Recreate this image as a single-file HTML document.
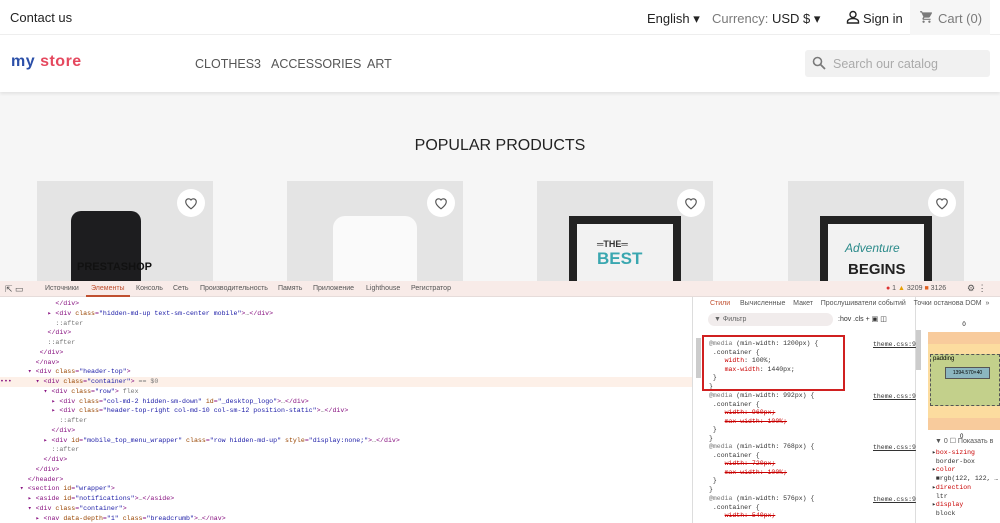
<!DOCTYPE html>
<html><head><meta charset="utf-8"><style>
*{margin:0;padding:0;box-sizing:border-box}
body{width:1000px;height:523px;overflow:hidden;background:#f6f6f6;font-family:"Liberation Sans",sans-serif;position:relative}
.abs{position:absolute}
.top{left:0;top:0;width:1000px;height:35px;background:#fff;border-bottom:1px solid #eee}
.hdr{left:0;top:35px;width:1000px;height:57px;background:#fff;box-shadow:0 2px 3px rgba(0,0,0,.08)}
.t{white-space:nowrap}
.card{top:181px;width:176px;height:100px;background:#e4e4e4;overflow:hidden}
.heart{width:28px;height:28px;border-radius:50%;background:#fff;top:8px;right:8px;display:flex;align-items:center;justify-content:center}
.dt{left:0;top:281px;width:1000px;height:242px;background:#fff}
.tabs{left:0;top:281px;width:1000px;height:16px;background:#f8ebe8;border-bottom:1px solid #e6dcda;font-size:7px;color:#555}
.code{font-family:"Liberation Mono",monospace;font-size:6.6px;color:#881280;line-height:9.75px}
.code div{height:9.75px;white-space:pre}
.a{color:#994500}.v{color:#1a1aa6}.g{color:#777}
.css{font-family:"Liberation Mono",monospace;font-size:6.5px;line-height:8.5px;color:#333;white-space:pre}
.r{color:#c80000}.s{text-decoration:line-through;color:#c80000}
</style></head><body>
<div class="abs top"></div>
<div class="abs t" style="left:10px;top:10px;font-size:13px;color:#232323">Contact us</div>
<div class="abs t" style="left:647px;top:11px;font-size:13px;color:#232323">English ▾</div>
<div class="abs t" style="left:712px;top:11px;font-size:13px;color:#7a7a7a">Currency: <span style="color:#232323">USD $ ▾</span></div>
<svg class="abs" style="left:846px;top:10px" width="14" height="14" viewBox="0 0 14 14"><circle cx="7" cy="4.5" r="3" fill="none" stroke="#232323" stroke-width="1.4"/><path d="M1.5 13v-1.5c0-2 3-3 5.5-3s5.5 1 5.5 3V13z" fill="none" stroke="#232323" stroke-width="1.4"/></svg>
<div class="abs t" style="left:863px;top:11px;font-size:13px;color:#232323">Sign in</div>
<div class="abs" style="left:910px;top:0;width:80px;height:35px;background:#f6f6f6"></div>
<svg class="abs" style="left:919px;top:10px" width="15" height="14" viewBox="0 0 24 24"><path fill="#7a7a7a" d="M7 18c-1.1 0-2 .9-2 2s.9 2 2 2 2-.9 2-2-.9-2-2-2zM1 2v2h2l3.6 7.6-1.4 2.4C5.1 14.3 5 14.6 5 15c0 1.1.9 2 2 2h12v-2H7.4l1.1-2h7.5c.8 0 1.4-.4 1.7-1l3.6-6.5c.1-.2.2-.3.2-.5 0-.6-.4-1-1-1H5.2l-.9-2H1zm16 16c-1.1 0-2 .9-2 2s.9 2 2 2 2-.9 2-2-.9-2-2-2z"/></svg>
<div class="abs t" style="left:938px;top:11px;font-size:13px;color:#7a7a7a">Cart (0)</div>
<div class="abs hdr"></div>
<div class="abs t" style="left:11px;top:53px;font-size:16px;font-weight:bold;letter-spacing:0.5px"><span style="color:#2b4fa8">my</span> <span style="color:#e5485e">store</span></div>
<div class="abs t" style="left:195px;top:57px;font-size:12.5px;color:#555">CLOTHES3</div>
<div class="abs t" style="left:271px;top:57px;font-size:12.5px;color:#555">ACCESSORIES</div>
<div class="abs t" style="left:367px;top:57px;font-size:12.5px;color:#555">ART</div>
<div class="abs" style="left:805px;top:50px;width:185px;height:27px;background:#f1f1f1;border-radius:3px"></div>
<svg class="abs" style="left:812px;top:56px" width="14" height="14" viewBox="0 0 14 14"><circle cx="5.5" cy="5.5" r="4" fill="none" stroke="#7a7a7a" stroke-width="1.6"/><path d="M8.5 8.5L13 13" stroke="#7a7a7a" stroke-width="1.8"/></svg>
<div class="abs t" style="left:833px;top:57px;font-size:12.5px;color:#aaa">Search our catalog</div>
<div class="abs t" style="left:0;width:1000px;text-align:center;top:137px;font-size:16px;color:#232323">POPULAR PRODUCTS</div>

<div class="abs card" style="left:37px"><div class="abs" style="left:34px;top:30px;width:70px;height:75px;background:#1d1d1f;border-radius:10px 10px 0 0"></div><div class="abs t" style="left:40px;top:80px;font-weight:bold;font-size:11px;color:#111">PRESTASHOP</div><div class="abs heart"><svg width="14" height="13" viewBox="0 0 24 22"><path d="M12 20s-9-6-9-12a5 5 0 0 1 9-3 5 5 0 0 1 9 3c0 6-9 12-9 12z" fill="none" stroke="#555" stroke-width="2"/></svg></div></div>
<div class="abs card" style="left:287px"><div class="abs" style="left:46px;top:35px;width:84px;height:70px;background:#fafafa;border-radius:12px 12px 0 0"></div><div class="abs heart"><svg width="14" height="13" viewBox="0 0 24 22"><path d="M12 20s-9-6-9-12a5 5 0 0 1 9-3 5 5 0 0 1 9 3c0 6-9 12-9 12z" fill="none" stroke="#555" stroke-width="2"/></svg></div></div>
<div class="abs card" style="left:537px"><div class="abs" style="left:32px;top:35px;width:112px;height:70px;background:#222"></div><div class="abs" style="left:40px;top:43px;width:96px;height:62px;background:#f2f2f2"></div><div class="abs t" style="left:60px;top:58px;font-size:9px;font-weight:bold;color:#333">═THE═</div><div class="abs t" style="left:60px;top:68px;font-size:17px;font-weight:bold;color:#3aa7b0">BEST</div><div class="abs heart"><svg width="14" height="13" viewBox="0 0 24 22"><path d="M12 20s-9-6-9-12a5 5 0 0 1 9-3 5 5 0 0 1 9 3c0 6-9 12-9 12z" fill="none" stroke="#555" stroke-width="2"/></svg></div></div>
<div class="abs card" style="left:788px"><div class="abs" style="left:32px;top:35px;width:112px;height:70px;background:#222"></div><div class="abs" style="left:40px;top:43px;width:96px;height:62px;background:#f2f2f2"></div><div class="abs t" style="left:57px;top:60px;font-size:12px;font-style:italic;color:#2a8a8a">Adventure</div><div class="abs t" style="left:60px;top:80px;font-size:15px;font-weight:bold;color:#222">BEGINS</div><div class="abs heart"><svg width="14" height="13" viewBox="0 0 24 22"><path d="M12 20s-9-6-9-12a5 5 0 0 1 9-3 5 5 0 0 1 9 3c0 6-9 12-9 12z" fill="none" stroke="#555" stroke-width="2"/></svg></div></div>

<div class="abs dt"></div>
<div class="abs tabs">
<span class="abs t" style="left:5px;top:3px;font-size:9px">⇱ ▭</span>
<span class="abs t" style="left:45px;top:4px">Источники</span>
<span class="abs t" style="left:91px;top:4px;color:#c05030">Элементы</span>
<div class="abs" style="left:86px;top:14px;width:44px;height:2px;background:#c05030"></div>
<span class="abs t" style="left:136px;top:4px">Консоль</span>
<span class="abs t" style="left:173px;top:4px">Сеть</span>
<span class="abs t" style="left:200px;top:4px">Производительность</span>
<span class="abs t" style="left:278px;top:4px">Память</span>
<span class="abs t" style="left:313px;top:4px">Приложение</span>
<span class="abs t" style="left:366px;top:4px">Lighthouse</span>
<span class="abs t" style="left:411px;top:4px">Регистратор</span>
<span class="abs t" style="left:886px;top:4px"><span style="color:#d33">●</span> 1 <span style="color:#e8a000">▲</span> 3209 <span style="color:#e06020">■</span> 3126</span>
<span class="abs t" style="left:967px;top:2px;font-size:9px">⚙ ⋮</span>
</div>
<div class="abs" style="left:0;top:377px;width:692px;height:10px;background:#fdf0e8"></div>
<div class="abs code" style="left:0;top:299px">
<div>              &lt;/div&gt;</div>
<div>            ▸ &lt;div <span class="a">class</span>=<span class="v">"hidden-md-up text-sm-center mobile"</span>&gt;<span class="g">…</span>&lt;/div&gt;</div>
<div class="g">              ::after</div>
<div>            &lt;/div&gt;</div>
<div class="g">            ::after</div>
<div>          &lt;/div&gt;</div>
<div>         &lt;/nav&gt;</div>
<div>       ▾ &lt;div <span class="a">class</span>=<span class="v">"header-top"</span>&gt;</div>
<div>•••      ▾ &lt;div <span class="a">class</span>=<span class="v">"container"</span>&gt; <span class="g">== $0</span></div>
<div>           ▾ &lt;div <span class="a">class</span>=<span class="v">"row"</span>&gt; <span class="g">flex</span></div>
<div>             ▸ &lt;div <span class="a">class</span>=<span class="v">"col-md-2 hidden-sm-down"</span> <span class="a">id</span>=<span class="v">"_desktop_logo"</span>&gt;<span class="g">…</span>&lt;/div&gt;</div>
<div>             ▸ &lt;div <span class="a">class</span>=<span class="v">"header-top-right col-md-10 col-sm-12 position-static"</span>&gt;<span class="g">…</span>&lt;/div&gt;</div>
<div class="g">               ::after</div>
<div>             &lt;/div&gt;</div>
<div>           ▸ &lt;div <span class="a">id</span>=<span class="v">"mobile_top_menu_wrapper"</span> <span class="a">class</span>=<span class="v">"row hidden-md-up"</span> <span class="a">style</span>=<span class="v">"display:none;"</span>&gt;<span class="g">…</span>&lt;/div&gt;</div>
<div class="g">             ::after</div>
<div>           &lt;/div&gt;</div>
<div>         &lt;/div&gt;</div>
<div>       &lt;/header&gt;</div>
<div>     ▾ &lt;section <span class="a">id</span>=<span class="v">"wrapper"</span>&gt;</div>
<div>       ▸ &lt;aside <span class="a">id</span>=<span class="v">"notifications"</span>&gt;<span class="g">…</span>&lt;/aside&gt;</div>
<div>       ▾ &lt;div <span class="a">class</span>=<span class="v">"container"</span>&gt;</div>
<div>         ▸ &lt;nav <span class="a">data-depth</span>=<span class="v">"1"</span> <span class="a">class</span>=<span class="v">"breadcrumb"</span>&gt;<span class="g">…</span>&lt;/nav&gt;</div>
</div>
<div class="abs" style="left:692px;top:297px;width:1px;height:226px;background:#ddd"></div>
<div class="abs" style="left:915px;top:297px;width:1px;height:226px;background:#ddd"></div>
<div class="abs t" style="left:710px;top:300px;font-size:7px;color:#c05030">Стили</div>
<div class="abs t" style="left:740px;top:300px;font-size:7px;color:#555">Вычисленные&nbsp;&nbsp;&nbsp; Макет&nbsp;&nbsp;&nbsp; Прослушиватели событий&nbsp;&nbsp;&nbsp; Точки останова DOM &nbsp;»</div>
<div class="abs" style="left:708px;top:313px;width:125px;height:13px;background:#f1ecec;border-radius:7px"></div>
<div class="abs t" style="left:714px;top:316px;font-size:7px;color:#666">▼ Фильтр</div>
<div class="abs t" style="left:838px;top:315px;font-size:7px;color:#333">:hov .cls + ▣ ◫</div>
<div class="abs" style="left:696px;top:338px;width:5px;height:40px;background:#ccc"></div>
<div class="abs" style="left:916px;top:330px;width:5px;height:40px;background:#ccc"></div>
<div class="abs css" style="left:709px;top:340px"><span class="g">@media</span> (min-width: 1200px) {
 .container {
    <span class="r">width</span>: 100%;
    <span class="r">max-width</span>: 1440px;
 }
}</div>
<div class="abs" style="left:702px;top:335px;width:143px;height:56px;border:2px solid #d02020"></div>
<div class="abs css" style="left:709px;top:392px"><span class="g">@media</span> (min-width: 992px) {
 .container {
    <span class="s">width: 960px;</span>
    <span class="s">max-width: 100%;</span>
 }
}</div>
<div class="abs css" style="left:709px;top:443px"><span class="g">@media</span> (min-width: 768px) {
 .container {
    <span class="s">width: 720px;</span>
    <span class="s">max-width: 100%;</span>
 }
}</div>
<div class="abs css" style="left:709px;top:495px"><span class="g">@media</span> (min-width: 576px) {
 .container {
    <span class="s">width: 540px;</span></div>
<div class="abs css" style="left:873px;top:393px;text-decoration:underline">theme.css:9</div>
<div class="abs css" style="left:873px;top:341px;text-decoration:underline">theme.css:9</div>
<div class="abs css" style="left:873px;top:444px;text-decoration:underline">theme.css:9</div>
<div class="abs css" style="left:873px;top:496px;text-decoration:underline">theme.css:9</div>
<div class="abs" style="left:928px;top:332px;width:72px;height:98px;background:#f8cb9c"></div>
<div class="abs" style="left:928px;top:344px;width:72px;height:74px;background:#fcdc9f"></div>
<div class="abs" style="left:930px;top:354px;width:70px;height:52px;background:#c3d08b;border:1px dashed #555"></div>
<div class="abs" style="left:945px;top:367px;width:45px;height:12px;background:#8cb6c0;border:1px solid #555;font-size:5px;text-align:center;line-height:10px">1394.570×40</div>
<div class="abs t" style="left:933px;top:356px;font-size:6px">padding</div>
<div class="abs" style="left:928px;top:322px;width:72px;height:10px;background:#fff;font-size:6px;text-align:center">0</div>
<div class="abs t" style="left:960px;top:434px;font-size:6px">0</div>
<div class="abs t" style="left:935px;top:437px;font-size:7px;color:#555">▼ 0 ☐ Показать в</div>
<div class="abs css" style="left:932px;top:449px;line-height:8.7px;font-size:6.5px">▸<span style="color:#c80000">box-sizing</span>
 border-box
▸<span style="color:#c80000">color</span>
 ■rgb(122, 122, …
▸<span style="color:#c80000">direction</span>
 ltr
▸<span style="color:#c80000">display</span>
 block</div>
</body></html>
